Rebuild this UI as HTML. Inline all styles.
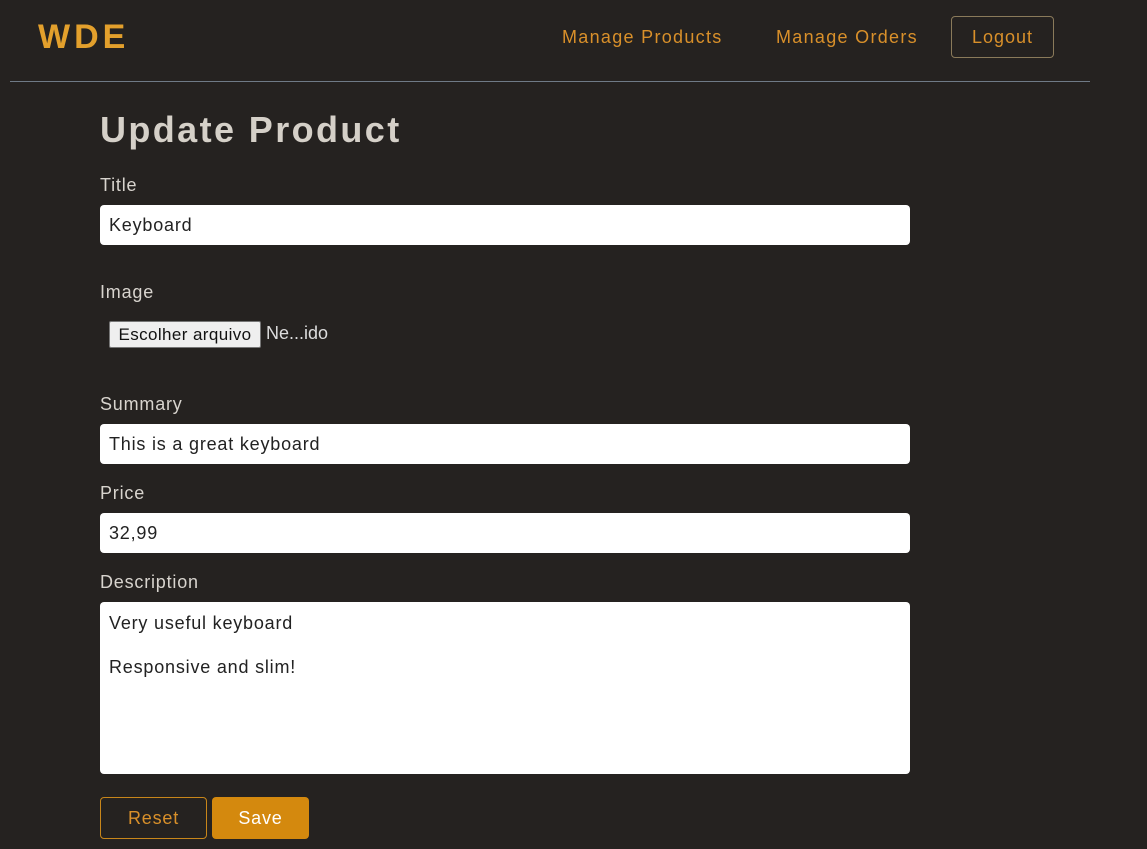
<!DOCTYPE html>
<html><head><meta charset="utf-8"><style>
*{box-sizing:border-box;margin:0;padding:0}
body{width:1147px;height:849px;background:#252220;font-family:"Liberation Sans",sans-serif;position:relative;overflow:hidden;color:#ddd}
.logo{position:absolute;left:38px;top:18px;font-size:34px;font-weight:bold;color:#e3a02c;letter-spacing:4px}
.nav{position:absolute;top:27px;font-size:18px;color:#d9902a;letter-spacing:1.3px}
.logout{position:absolute;left:951px;top:16px;width:103px;height:42px;border:1px solid #8a7a5a;border-radius:4px;color:#d9902a;font-size:18px;text-align:center;line-height:40px;letter-spacing:1px}
.hr{position:absolute;left:10px;top:81px;width:1080px;height:1px;background:#6f7a86}
h1{position:absolute;left:100px;top:109px;font-size:36px;color:#d5d0c8;font-weight:bold;letter-spacing:2.4px}
.lbl{position:absolute;left:100px;font-size:18px;color:#d8d4ce;letter-spacing:0.8px;margin-top:1px}
.inp{position:absolute;left:100px;width:810px;height:40px;background:#fff;border-radius:4px;font-size:18px;color:#222;padding:10px 9px;letter-spacing:0.8px}
.file{position:absolute;left:109px;top:321px;width:152px;height:27px;background:#efefef;border:1px solid #767676;border-radius:2px;color:#111;font-size:17px;text-align:center;line-height:25px;letter-spacing:0.4px}
.fn{position:absolute;left:266px;top:323px;font-size:18px;color:#ddd}
.btn{position:absolute;top:797px;height:42px;border-radius:4px;font-size:18px;text-align:center;line-height:42px;letter-spacing:0.8px}
</style></head><body>
<div class="logo">WDE</div>
<div class="nav" style="left:562px">Manage Products</div>
<div class="nav" style="left:776px">Manage Orders</div>
<div class="logout">Logout</div>
<div class="hr"></div>
<h1>Update Product</h1>
<div class="lbl" style="top:174px">Title</div>
<div class="inp" style="top:205px">Keyboard</div>
<div class="lbl" style="top:281px">Image</div>
<div class="file">Escolher arquivo</div>
<div class="fn">Ne...ido</div>
<div class="lbl" style="top:393px">Summary</div>
<div class="inp" style="top:424px">This is a great keyboard</div>
<div class="lbl" style="top:482px">Price</div>
<div class="inp" style="top:513px">32,99</div>
<div class="lbl" style="top:571px">Description</div>
<div class="inp" style="top:602px;height:172px;line-height:22px">Very useful keyboard<br><br>Responsive and slim!</div>
<div class="btn" style="left:100px;width:107px;border:1px solid #c8861a;color:#d9902a;line-height:40px">Reset</div>
<div class="btn" style="left:212px;width:97px;background:#d4890e;color:#fff">Save</div>
</body></html>
